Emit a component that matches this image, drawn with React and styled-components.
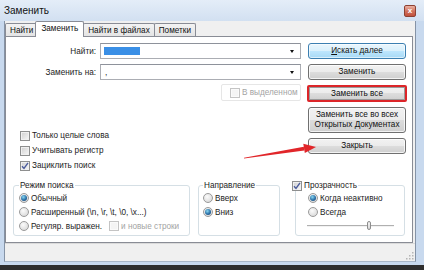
import React from "react";
import styled, { createGlobalStyle, css } from "styled-components";

const GlobalStyle = createGlobalStyle`
  html, body {
    margin: 0;
    padding: 0;
    background: #fff;
  }
  body {
    font-family: "Liberation Sans", Arial, sans-serif;
    font-size: 8.2px;
    color: #1c1c1c;
  }
`;

const Window = styled.div`
  position: relative;
  width: 424px;
  height: 270px;
  box-sizing: border-box;
  display: flex;
  flex-direction: column;
  background: #c8d9ee;
  border-bottom: 5px solid #2e2e2e;
  overflow: hidden;
`;

const TitleBar = styled.div`
  height: 21px;
  flex: none;
  display: flex;
  align-items: center;
  padding: 0 8px 0 4px;
  background: linear-gradient(#e4edf8, #d2e0f1);
  font-size: 10px;
  color: #111;
`;

const CloseButton = styled.div`
  margin-left: auto;
  width: 12px;
  height: 12px;
  box-sizing: border-box;
  border: 1px solid #8d4133;
  border-radius: 2px;
  background: linear-gradient(#eab1a2, #d0705c 55%, #c2503c);
  color: #fff;
  font-size: 8px;
  font-weight: bold;
  line-height: 9px;
  text-align: center;
`;

const Client = styled.div`
  flex: 1;
  margin: 0 8px 3px 4px;
  display: flex;
  flex-direction: column;
  background: #f0f0f0;
  border-left: 1px solid #8593a6;
  border-right: 1px solid #8593a6;
  border-bottom: 1px solid #a9b7c8;
`;

const TabStrip = styled.div`
  height: 15px;
  flex: none;
  display: flex;
  align-items: flex-end;
  position: relative;
  z-index: 1;
`;

const Tab = styled.div`
  box-sizing: border-box;
  height: ${(p) => (p.$active ? 16 : 13)}px;
  padding: 0 ${(p) => p.$pad}px;
  margin-right: -1px;
  display: flex;
  align-items: center;
  border: 1px solid #898c95;
  border-bottom: none;
  border-radius: 2px 2px 0 0;
  background: linear-gradient(#f3f3f3, #e4e4e4);
  color: #111;
  ${(p) =>
    p.$active &&
    css`
      background: #fff;
      margin: 0 -1px -1px -2px;
      position: relative;
      z-index: 2;
      height: 16px;
      padding-bottom: 2px;
    `}
`;

const Panel = styled.div`
  height: 207px;
  box-sizing: border-box;
  margin: 0 2px 0 0;
  padding: 6px 6px 6px 7px;
  display: flex;
  flex-direction: column;
  background: #fff;
  border: 1px solid #898c95;
`;

const TopGrid = styled.div`
  display: grid;
  grid-template-columns: 1fr 98px;
  column-gap: 7px;
`;

const LeftColumn = styled.div`
  display: flex;
  flex-direction: column;
`;

const FieldRow = styled.div`
  display: flex;
  align-items: center;
  gap: 4px;
  height: 16px;
  margin-bottom: ${(p) => p.$mb || 0}px;
`;

const FieldLabel = styled.div`
  width: 83px;
  text-align: right;
`;

const Combo = styled.div`
  flex: 1;
  height: 16px;
  box-sizing: border-box;
  display: flex;
  align-items: center;
  padding: 0 6px 0 2px;
  border: 1px solid #abadb3;
  border-top-color: #8e929b;
  background: #fff;
`;

const ComboValue = styled.div`
  flex: 1;
  display: flex;
  align-items: center;
  padding-left: ${(p) => p.$indent || 0}px;
`;

const Selection = styled.span`
  width: 36px;
  height: 8px;
  background: #3a8fe6;
`;

const DropArrow = styled.span`
  width: 0;
  height: 0;
  border-left: 2.5px solid transparent;
  border-right: 2.5px solid transparent;
  border-top: 3px solid #111;
`;

const SelectionBox = styled.div`
  align-self: flex-end;
  width: 80px;
  height: 17px;
  box-sizing: border-box;
  margin-top: 4px;
  padding-left: 8px;
  display: flex;
  align-items: center;
  gap: 2px;
  border: 1px solid #e6e6e6;
  border-radius: 2px;
`;

const OptionList = styled.div`
  margin-top: 27px;
  padding-left: 7px;
  display: flex;
  flex-direction: column;
`;

const OptionRow = styled.label`
  height: ${(p) => p.$h || 15}px;
  display: flex;
  align-items: center;
  gap: 2px;
  white-space: nowrap;
  color: ${(p) => (p.$disabled ? "#a3a3a3" : "inherit")};
`;

const ButtonColumn = styled.div`
  display: flex;
  flex-direction: column;
  gap: 5px;
`;

const Button = styled.div`
  box-sizing: border-box;
  height: ${(p) => p.$h || 16}px;
  display: flex;
  align-items: center;
  justify-content: center;
  text-align: center;
  line-height: 10px;
  border: 1px solid #707070;
  border-radius: 3px;
  background: linear-gradient(#f2f2f2 0%, #ebebeb 50%, #dddddd 50%, #cfcfcf 100%);
  box-shadow: inset 0 0 0 1px rgba(255, 255, 255, 0.75);
  color: #111;
  ${(p) =>
    p.$default &&
    css`
      border-color: #3c7fb1;
      background: linear-gradient(#eaf6fd 0%, #d9f0fc 50%, #bee6fd 50%, #a7d9f5 100%);
      box-shadow: inset 0 0 0 1px rgba(255, 255, 255, 0.6);
    `}
  ${(p) =>
    p.$marked &&
    css`
      margin: 0 -1px;
      border: 2px solid #dc2529;
      border-radius: 2px;
      box-shadow: inset 0 0 0 1px #9a9a9a;
    `}
`;

const GroupsRow = styled.div`
  margin-top: auto;
  display: flex;
`;

const Group = styled.fieldset`
  width: ${(p) => p.$w}px;
  box-sizing: border-box;
  margin: 0 0 0 ${(p) => p.$ml || 0}px;
  padding: 0 4px 2px ${(p) => p.$pl || 5}px;
  min-width: 0;
  border: 1px solid #d5dfe5;
  border-radius: 3px;
`;

const Legend = styled.legend`
  padding: 0 1px;
  margin-left: ${(p) => p.$ml || 0}px;
  line-height: 11px;
  display: flex;
  align-items: center;
  gap: 2px;
`;

const CheckBox = styled.span`
  width: 10px;
  height: 10px;
  flex: none;
  box-sizing: border-box;
  display: inline-flex;
  align-items: center;
  justify-content: center;
  border: 1px solid ${(p) => (p.$disabled ? "#c4c4c4" : "#8e8f8f")};
  background: ${(p) =>
    p.$disabled ? "#f4f4f4" : "linear-gradient(135deg, #cfcfcf, #f8f8f8)"};
  box-shadow: inset 0 0 0 1px ${(p) => (p.$disabled ? "#fafafa" : "#f0f0f0")};
`;

const Radio = styled.span`
  width: 10px;
  height: 10px;
  flex: none;
  box-sizing: border-box;
  display: inline-flex;
  align-items: center;
  justify-content: center;
  border: 1px solid #9a9a9a;
  border-radius: 50%;
  background: radial-gradient(circle at 40% 35%, #fbfbfb, #d2d2d2);
  &::after {
    content: "";
    display: ${(p) => (p.$checked ? "block" : "none")};
    width: 6px;
    height: 6px;
    border-radius: 50%;
    background: radial-gradient(circle at 40% 35%, #8ad8f2, #2a6fa6 55%, #173f6b);
  }
`;

const Slider = styled.div`
  position: relative;
  width: 87px;
  height: 14px;
  margin-left: -1px;
  display: flex;
  align-items: center;
`;

const SliderTrack = styled.div`
  width: 100%;
  height: 1px;
  background: #b0b0b0;
  border-bottom: 1px solid #f2f2f2;
`;

const SliderThumb = styled.div`
  position: absolute;
  left: 60px;
  top: 2px;
  width: 4px;
  height: 9px;
  box-sizing: border-box;
  border: 1px solid #8d8d8d;
  border-radius: 2px;
  background: linear-gradient(#f4f4f4, #d8d8d8);
`;

const StatusBar = styled.div`
  flex: 1;
  display: flex;
  align-items: flex-end;
  justify-content: flex-end;
  padding: 0 1px 1px 0;
  border-top: 1px solid #dadada;
`;

const Overlay = styled.svg`
  position: absolute;
  left: 0;
  top: 0;
  pointer-events: none;
`;

const Check = () => (
  <svg width="8" height="8" viewBox="0 0 8 8">
    <path d="M1 4.2 L3 6.4 L7 0.8" fill="none" stroke="#4b5c9c" strokeWidth="1.4" />
  </svg>
);

const Option = ({ checked, disabled, children, h }) => (
  <OptionRow $disabled={disabled} $h={h}>
    <CheckBox $disabled={disabled}>{checked && <Check />}</CheckBox>
    {children}
  </OptionRow>
);

const RadioOption = ({ checked, children }) => (
  <OptionRow $h={14}>
    <Radio $checked={checked} />
    {children}
  </OptionRow>
);

const Grip = () => (
  <svg width="10" height="10" viewBox="0 0 10 10">
    {[
      [8, 2],
      [8, 5],
      [5, 5],
      [8, 8],
      [5, 8],
      [2, 8],
    ].map(([x, y], i) => (
      <rect key={i} x={x} y={y} width="1.5" height="1.5" fill="#b5b5b5" />
    ))}
  </svg>
);

export default function App() {
  return (
    <>
      <GlobalStyle />
      <Window>
        <TitleBar>
          Заменить
          <CloseButton>x</CloseButton>
        </TitleBar>
        <Client>
          <TabStrip>
            <Tab $pad={4}>Найти</Tab>
            <Tab $pad={5} $active>
              Заменить
            </Tab>
            <Tab $pad={4}>Найти в файлах</Tab>
            <Tab $pad={4}>Пометки</Tab>
          </TabStrip>
          <Panel>
            <TopGrid>
              <LeftColumn>
                <FieldRow $mb={5}>
                  <FieldLabel>Найти:</FieldLabel>
                  <Combo>
                    <ComboValue $indent={1}>
                      <Selection />
                    </ComboValue>
                    <DropArrow />
                  </Combo>
                </FieldRow>
                <FieldRow>
                  <FieldLabel>Заменить на:</FieldLabel>
                  <Combo>
                    <ComboValue $indent={2}>,</ComboValue>
                    <DropArrow />
                  </Combo>
                </FieldRow>
                <SelectionBox>
                  <Option disabled>В выделенном</Option>
                </SelectionBox>
                <OptionList>
                  <Option>Только целые слова</Option>
                  <Option>Учитывать регистр</Option>
                  <Option checked>Зациклить поиск</Option>
                </OptionList>
              </LeftColumn>
              <ButtonColumn>
                <Button $default>
                  <span>
                    <u>И</u>скать далее
                  </span>
                </Button>
                <Button>Заменить</Button>
                <Button $marked $h={17}>
                  Заменить все
                </Button>
                <Button $h={26}>
                  <span>
                    Заменить все во всех
                    <br />
                    Открытых <u>Д</u>окументах
                  </span>
                </Button>
                <Button>Закрыть</Button>
              </ButtonColumn>
            </TopGrid>
            <GroupsRow>
              <Group $w={177} $pl={5}>
                <Legend>Режим поиска</Legend>
                <RadioOption checked>Обычный</RadioOption>
                <RadioOption>Расширенный (\n, \r, \t, \0, \x...)</RadioOption>
                <OptionRow $h={14}>
                  <Radio />
                  Регуляр. выражен.
                  <OptionRow $disabled style={{ marginLeft: 5 }}>
                    <CheckBox $disabled />и новые строки
                  </OptionRow>
                </OptionRow>
              </Group>
              <Group $w={82} $ml={8} $pl={4}>
                <Legend>Направление</Legend>
                <RadioOption>Вверх</RadioOption>
                <RadioOption checked>Вниз</RadioOption>
              </Group>
              <Group $w={110} $ml={15} $pl={12}>
                <Legend $ml={-17}>
                  <CheckBox>
                    <Check />
                  </CheckBox>
                  Прозрачность
                </Legend>
                <RadioOption checked>Когда неактивно</RadioOption>
                <RadioOption>Всегда</RadioOption>
                <Slider>
                  <SliderTrack />
                  <SliderThumb />
                </Slider>
              </Group>
            </GroupsRow>
          </Panel>
          <StatusBar>
            <Grip />
          </StatusBar>
        </Client>
        <Overlay width="424" height="270">
          <path d="M244 158.6 L304.4 150.6 L303.8 146.8 L244 157.8 Z" fill="#e1262a" />
          <polygon points="316,147 303.3,143.8 304.8,153" fill="#e1262a" />
        </Overlay>
      </Window>
    </>
  );
}
